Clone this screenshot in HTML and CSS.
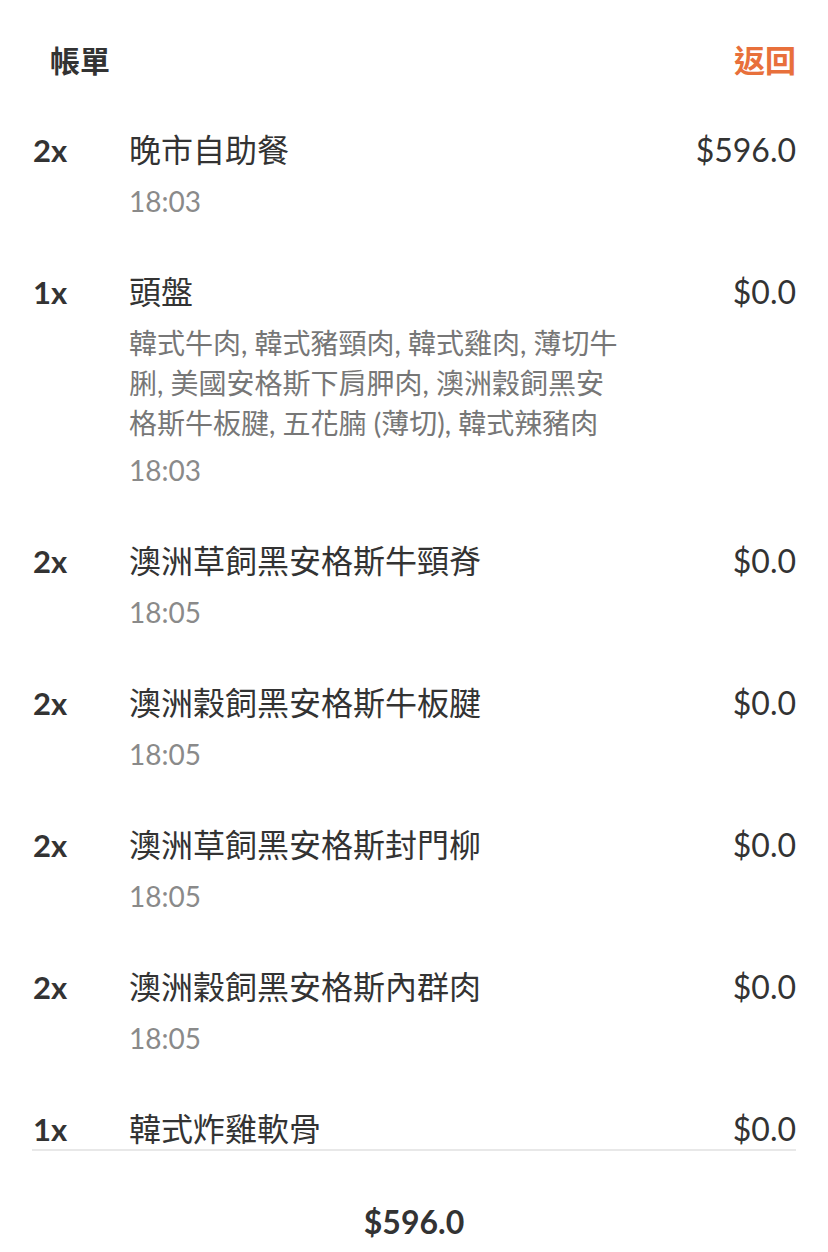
FILE: index.html
```html
<!DOCTYPE html>
<html lang="zh-Hant">
<head>
<meta charset="utf-8">
<title>帳單</title>
<link rel="stylesheet" href="styles.css">
</head>
<body>
<div class="page">
  <header class="header">
    <h1 class="title">帳單</h1>
    <a class="back">返回</a>
  </header>
  <div class="list">
    <div class="row">
      <div class="qty">2x</div>
      <div class="info">
        <div class="name">晚市自助餐</div>
        <div class="time">18:03</div>
      </div>
      <div class="price">$596.0</div>
    </div>
    <div class="row">
      <div class="qty">1x</div>
      <div class="info">
        <div class="name">頭盤</div>
        <div class="desc">韓式牛肉, 韓式豬頸肉, 韓式雞肉, 薄切牛脷, 美國安格斯下肩胛肉, 澳洲穀飼黑安格斯牛板腱, 五花腩 (薄切), 韓式辣豬肉</div>
        <div class="time">18:03</div>
      </div>
      <div class="price">$0.0</div>
    </div>
    <div class="row">
      <div class="qty">2x</div>
      <div class="info">
        <div class="name">澳洲草飼黑安格斯牛頸脊</div>
        <div class="time">18:05</div>
      </div>
      <div class="price">$0.0</div>
    </div>
    <div class="row">
      <div class="qty">2x</div>
      <div class="info">
        <div class="name">澳洲穀飼黑安格斯牛板腱</div>
        <div class="time">18:05</div>
      </div>
      <div class="price">$0.0</div>
    </div>
    <div class="row">
      <div class="qty">2x</div>
      <div class="info">
        <div class="name">澳洲草飼黑安格斯封門柳</div>
        <div class="time">18:05</div>
      </div>
      <div class="price">$0.0</div>
    </div>
    <div class="row">
      <div class="qty">2x</div>
      <div class="info">
        <div class="name">澳洲穀飼黑安格斯內群肉</div>
        <div class="time">18:05</div>
      </div>
      <div class="price">$0.0</div>
    </div>
    <div class="row">
      <div class="qty">1x</div>
      <div class="info">
        <div class="name">韓式炸雞軟骨</div>
      </div>
      <div class="price">$0.0</div>
    </div>
  </div>
  <footer class="footer">
    <div class="total">$596.0</div>
  </footer>
</div>
</body>
</html>
```

FILE: styles.css
```css
* { box-sizing: border-box; }
html, body {
  margin: 0;
  padding: 0;
  background: #ffffff;
}
body {
  font-family: Lato, "Noto Sans CJK TC", sans-serif;
  color: #333333;
}
.page {
  width: 828px;
  height: 1252px;
  display: flex;
  flex-direction: column;
  overflow: hidden;
}
.header {
  display: flex;
  justify-content: space-between;
  align-items: center;
  padding: 38px 32px 21px 50px;
  flex: 0 0 auto;
}
.title {
  margin: 0;
  font-size: 30px;
  line-height: 44px;
  font-weight: 700;
  color: #333333;
}
.back {
  font-size: 31px;
  line-height: 44px;
  font-weight: 700;
  color: #e8703b;
}
.list {
  margin: 0 32px;
  height: 1048px;
  flex: 0 0 auto;
  overflow: hidden;
  border-bottom: 2px solid #e8e8e8;
}
.row {
  display: grid;
  grid-template-columns: 97px 490px 1fr;
  padding: 25px 0 24px;
}
.qty {
  font-size: 31px;
  line-height: 44px;
  font-weight: 700;
  color: #333333;
  padding-left: 1px;
}
.info {
  display: flex;
  flex-direction: column;
}
.name {
  font-size: 32px;
  line-height: 44px;
  color: #333333;
}
.desc {
  margin-top: 9px;
  font-size: 28px;
  line-height: 40px;
  color: #777777;
}
.time {
  margin-top: 9px;
  font-size: 28px;
  line-height: 40px;
  color: #8a8a8a;
}
.desc + .time {
  margin-top: 7px;
}
.price {
  text-align: right;
  font-size: 32px;
  line-height: 44px;
  color: #333333;
}
.footer {
  display: flex;
  justify-content: center;
  padding-top: 49px;
}
.total {
  font-size: 32px;
  line-height: 44px;
  font-weight: 700;
  color: #333333;
}
```
